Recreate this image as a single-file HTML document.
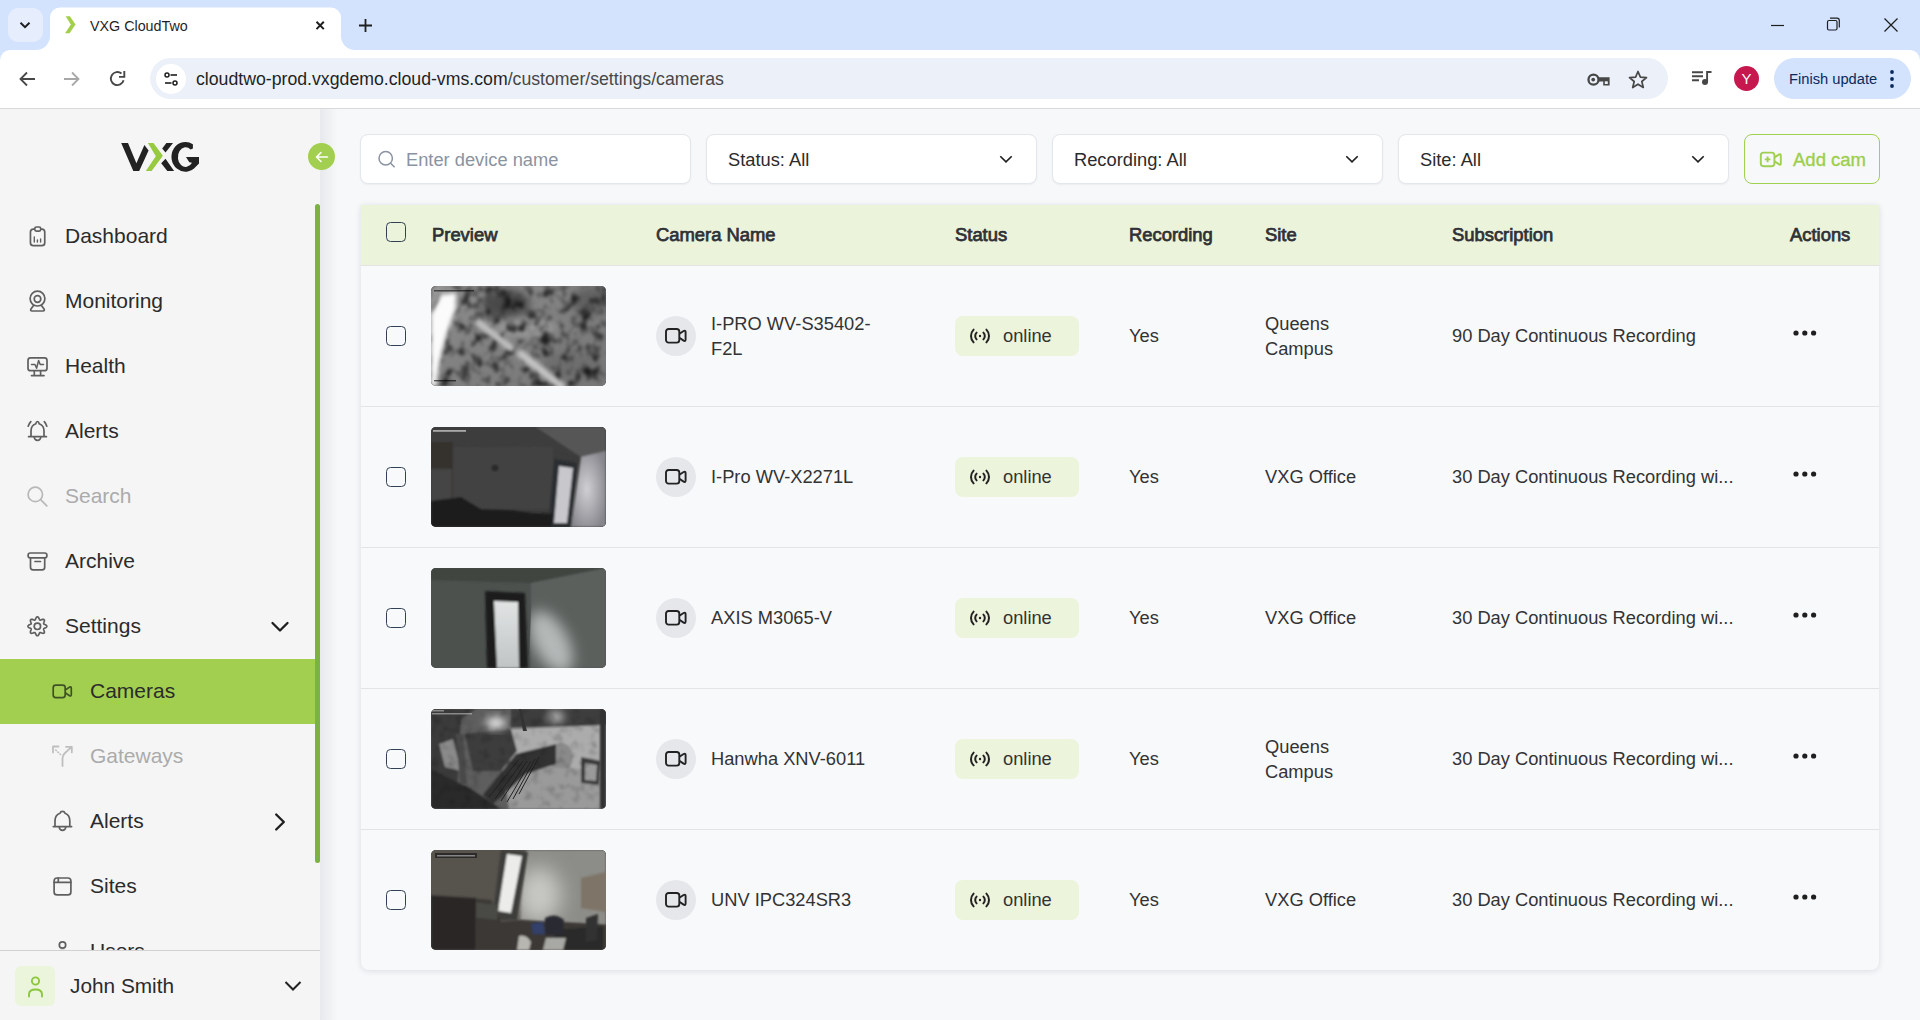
<!DOCTYPE html>
<html><head><meta charset="utf-8">
<style>
*{box-sizing:border-box;margin:0;padding:0}
html,body{width:1920px;height:1020px;overflow:hidden;background:#f7f8fa;font-family:"Liberation Sans",sans-serif;color:#2b2b2b}
.abs{position:absolute}
svg{display:block}
/* chrome */
#tabstrip{left:0;top:0;width:1920px;height:62px;background:#d3e3fd}
#toolbar{left:0;top:50px;width:1920px;height:58px;background:#fff}
#tbline{left:0;top:108px;width:1920px;height:1px;background:#d9d9d9}
/* sidebar */
#sidebar{left:0;top:109px;width:320px;height:911px;background:#f5f5f5;overflow:hidden}
.nav{position:absolute;left:0;width:315px;height:65px;line-height:65px;font-size:21px;color:#2b2b2b;white-space:nowrap}
.nav .ic{position:absolute;left:25px;top:20px;width:24px;height:24px}
.nav .tx{position:absolute;left:65px;top:-1px}
.nav.sub .ic{left:50px}
.nav.sub .tx{left:90px}
.nav.dis{color:#ababab}
/* main */
.field{position:absolute;top:134px;height:50px;background:#fff;border:1px solid #e3e6ea;border-radius:8px;box-shadow:0 1px 2px rgba(16,24,40,.05)}
.field .tx{position:absolute;left:21px;top:1px;line-height:48px;font-size:18.3px;color:#2b2b2b;white-space:nowrap}
.field .chev{position:absolute;right:23px;top:19px}
#card{left:361px;top:205px;width:1518px;height:765px;background:#f8f9fb;border-radius:0 0 8px 8px;box-shadow:0 1px 6px rgba(16,24,40,.12)}
#thead{left:0;top:0;width:1518px;height:61px;background:#ebf3db;border-bottom:1px solid #e4e4e4}
.th{position:absolute;top:0px;line-height:60px;font-size:18.4px;font-weight:400;color:#2f3136;-webkit-text-stroke:0.75px #2f3136;white-space:nowrap}
.row{position:absolute;left:0;width:1518px;height:141px;border-bottom:1px solid #e4e4e4}
.row:last-child{border-bottom:none}
.cb{position:absolute;width:20px;height:20px;border:1.4px solid #334155;border-radius:4.5px}
.thumb{position:absolute;left:70px;top:20px;width:175px;height:100px;border-radius:5px;overflow:hidden;background:#333}
.camic{position:absolute;left:295px;top:50px;width:40px;height:40px;border-radius:50%;background:#e5e7eb}
.td{position:absolute;font-size:18.3px;color:#333;white-space:nowrap;line-height:25px}
.pill{position:absolute;left:594px;top:50px;width:124px;height:40px;border-radius:8px;background:#edf4dc}
.pill .tx{position:absolute;left:48px;top:0;line-height:40px;font-size:18.3px;color:#333}
.dots{position:absolute;left:1431px;top:60px}
</style></head><body>


<!-- ============ BROWSER CHROME ============ -->
<div id="tabstrip" class="abs"></div>
<div class="abs" style="left:8px;top:8px;width:35px;height:34px;border-radius:10px;background:#e6eefd"></div>
<svg class="abs" style="left:17px;top:17px" width="16" height="16" viewBox="0 0 16 16"><path d="M3.5 5.8 L8 10.2 L12.5 5.8" fill="none" stroke="#1f1f1f" stroke-width="2"/></svg>
<svg class="abs" style="left:0;top:0" width="400" height="50" viewBox="0 0 400 50"><path d="M36 50 A14 14 0 0 0 50 36 L50 17.5 A10 10 0 0 1 60 7.5 L331 7.5 A10 10 0 0 1 341 17.5 L341 36 A14 14 0 0 0 355 50 Z" fill="#fff"/></svg>
<svg class="abs" style="left:60px;top:12px" width="20" height="24" viewBox="60 12 20 24"><path d="M66.2 16.6 L69.8 16.6 L75.2 24.6 L69.4 33 L65.6 33 L71.1 24.6 Z" fill="#a2cf48" stroke="#a2cf48" stroke-width="0.6" stroke-linejoin="round"/></svg>
<div class="abs" style="left:90px;top:16px;font-size:14.3px;line-height:20px;color:#1f1f1f;white-space:nowrap">VXG CloudTwo</div>
<svg class="abs" style="left:312px;top:17px" width="16" height="16" viewBox="0 0 16 16"><path d="M4.5 4.8 L11.8 12.1 M11.8 4.8 L4.5 12.1" stroke="#1f1f1f" stroke-width="2"/></svg>
<svg class="abs" style="left:357px;top:17px" width="17" height="17" viewBox="0 0 17 17"><path d="M8.5 2 V15 M2 8.5 H15" stroke="#1f1f1f" stroke-width="1.8"/></svg>
<svg class="abs" style="left:1768px;top:17px" width="18" height="18" viewBox="0 0 18 18"><path d="M3 8.5 H16" stroke="#1f1f1f" stroke-width="1.2"/></svg>
<svg class="abs" style="left:1824px;top:15px" width="18" height="18" viewBox="0 0 18 18"><rect x="3.5" y="5.5" width="9.5" height="9.5" rx="1.5" fill="none" stroke="#1f1f1f" stroke-width="1.2"/><path d="M6 3.2 H13 A2.3 2.3 0 0 1 15.3 5.5 V12.5" fill="none" stroke="#1f1f1f" stroke-width="1.2"/></svg>
<svg class="abs" style="left:1882px;top:16px" width="18" height="18" viewBox="0 0 18 18"><path d="M2.5 2.5 L15.5 15.5 M15.5 2.5 L2.5 15.5" stroke="#1f1f1f" stroke-width="1.3"/></svg>

<div id="toolbar" class="abs" style="border-radius:10px 10px 0 0"></div>
<div id="tbline" class="abs"></div>
<svg class="abs" style="left:17px;top:69px" width="20" height="20" viewBox="0 0 20 20"><path d="M18 10 H4 M10 3.5 L3.5 10 L10 16.5" fill="none" stroke="#474747" stroke-width="1.8"/></svg>
<svg class="abs" style="left:62px;top:69px" width="20" height="20" viewBox="0 0 20 20"><path d="M2 10 H16 M10 3.5 L16.5 10 L10 16.5" fill="none" stroke="#a8a8a8" stroke-width="1.8"/></svg>
<svg class="abs" style="left:107px;top:69px" width="20" height="20" viewBox="0 0 20 20"><path d="M16.6 11.3 A6.5 6.5 0 1 1 14.5 4.6" fill="none" stroke="#474747" stroke-width="1.9"/><path d="M12 7.9 H17.3 V2" fill="none" stroke="#474747" stroke-width="1.9"/></svg>
<div class="abs" style="left:150px;top:58px;width:1518px;height:41px;border-radius:21px;background:#ecf1f9"></div>
<div class="abs" style="left:156px;top:64px;width:30px;height:30px;border-radius:50%;background:#fff"></div>
<svg class="abs" style="left:163px;top:71px" width="16" height="16" viewBox="0 0 16 16"><circle cx="4" cy="4" r="2" fill="none" stroke="#1f1f1f" stroke-width="1.5"/><path d="M7.5 4 H14" stroke="#1f1f1f" stroke-width="1.6"/><circle cx="12" cy="12" r="2" fill="none" stroke="#1f1f1f" stroke-width="1.5"/><path d="M2 12 H8.5" stroke="#1f1f1f" stroke-width="1.6"/></svg>
<div class="abs" style="left:196px;top:68px;font-size:17.7px;line-height:22px;color:#1f1f1f;white-space:nowrap">cloudtwo-prod.vxgdemo.cloud-vms.com<span style="color:#474747">/customer/settings/cameras</span></div>
<svg class="abs" style="left:1584px;top:68px" width="30" height="22" viewBox="1584 68 30 22"><circle cx="1593.5" cy="79.7" r="5" fill="none" stroke="#474747" stroke-width="2.3"/><circle cx="1593.2" cy="79.6" r="1.9" fill="#474747"/><path d="M1598.5 77.3 H1609.6 V85.6 H1603.2 V81.6 H1598.5 Z" fill="#474747"/><rect x="1604.8" y="81.3" width="3" height="2.7" fill="#ecf1f9"/></svg>
<svg class="abs" style="left:1627px;top:69px" width="22" height="22" viewBox="0 0 22 22"><path d="M11 2.5 L13.4 8.2 L19.5 8.6 L14.8 12.5 L16.3 18.5 L11 15.2 L5.7 18.5 L7.2 12.5 L2.5 8.6 L8.6 8.2 Z" fill="none" stroke="#474747" stroke-width="1.7" stroke-linejoin="round"/></svg>
<svg class="abs" style="left:1690px;top:68px" width="24" height="22" viewBox="0 0 24 22"><path d="M2 4.3 H13 M2 8.2 H13 M2 12.2 H9" stroke="#474747" stroke-width="1.9"/><path d="M17.1 14 V4 H21.5" fill="none" stroke="#474747" stroke-width="1.9"/><circle cx="15" cy="14.1" r="3" fill="#474747"/></svg>
<div class="abs" style="left:1734px;top:66px;width:25px;height:25px;border-radius:50%;background:#c6174f;color:#fff;font-size:15px;line-height:25px;text-align:center">Y</div>
<div class="abs" style="left:1774px;top:58px;width:137px;height:41px;border-radius:21px;background:#d3e3fd"></div>
<div class="abs" style="left:1789px;top:68px;font-size:14.7px;line-height:22px;color:#0a2a5c;white-space:nowrap">Finish update</div>
<svg class="abs" style="left:1886px;top:68px" width="12" height="22" viewBox="0 0 12 22"><circle cx="6" cy="4" r="1.9" fill="#0a2a5c"/><circle cx="6" cy="11" r="1.9" fill="#0a2a5c"/><circle cx="6" cy="18" r="1.9" fill="#0a2a5c"/></svg>


<!-- ============ SIDEBAR ============ -->
<div id="sidebar" class="abs"></div>
<div class="abs" style="left:0;top:659px;width:315px;height:65px;background:#a2cf4f"></div>
<div class="nav " style="top:204px"><span class="tx">Dashboard</span></div>
<div class="nav " style="top:269px"><span class="tx">Monitoring</span></div>
<div class="nav " style="top:334px"><span class="tx">Health</span></div>
<div class="nav " style="top:399px"><span class="tx">Alerts</span></div>
<div class="nav dis" style="top:464px"><span class="tx">Search</span></div>
<div class="nav " style="top:529px"><span class="tx">Archive</span></div>
<div class="nav " style="top:594px"><span class="tx">Settings</span></div>
<div class="nav sub" style="top:659px"><span class="tx">Cameras</span></div>
<div class="nav sub dis" style="top:724px"><span class="tx">Gateways</span></div>
<div class="nav sub" style="top:789px"><span class="tx">Alerts</span></div>
<div class="nav sub" style="top:854px"><span class="tx">Sites</span></div>
<div class="nav sub" style="top:919px"><span class="tx">Users</span></div>

<svg class="abs" style="left:0;top:109px" width="320" height="911" viewBox="0 109 320 911"><g fill="none" stroke="#5f5f5f" stroke-width="1.7" stroke-linecap="round" stroke-linejoin="round">
<rect x="30.45" y="229.05" width="14.3" height="16.6" rx="3"/>
<rect x="34.8" y="227" width="5.9" height="4.2" rx="1.6" fill="#f5f5f5"/>
<path d="M34.3 237 V242 M37.4 240 V242 M40.6 239 V242" stroke-width="1.4"/>

<circle cx="37.5" cy="298.6" r="7.4"/>
<circle cx="37.5" cy="299" r="3.3"/>
<path d="M33.5 305.5 L30.8 309.3 Q30.2 311 32 311 H43 Q44.8 311 44.2 309.3 L41.5 305.5"/>

<rect x="28" y="357.8" width="19" height="12.9" rx="2.5"/>
<path d="M31.5 364.5 H35 L36.6 368.3 L38.6 360.5 L40.2 364.5 H43.5" stroke-width="1.5"/>
<path d="M34.3 371 V375.6 M40.6 371 V375.6 M31.5 375.6 H44"/>

<path d="M28.2 426.2 Q29 423.5 30.8 421.6 M44.3 421.6 Q46 423.5 46.8 426.2"/>
<path d="M31 436.7 V431 Q31 425.5 35.8 423.8 Q36.3 421.5 37.5 421.5 Q38.7 421.5 39.2 423.8 Q44 425.5 44 431 V436.7 M28.6 436.7 H46.4 M34.2 437 A3.3 3.3 0 0 0 40.8 437"/>

<g stroke="#b8b8b8"><circle cx="35.3" cy="494.4" r="7.2"/><path d="M40.6 499.7 L46.8 505.9"/></g>

<rect x="28.1" y="553" width="18.8" height="4.9" rx="2.2"/>
<path d="M30.5 557.9 V567.3 Q30.5 569.8 33 569.8 H42.2 Q44.7 569.8 44.7 567.3 V557.9 M35 561.5 H40.5"/>

<path d="M37.40 616.85 L37.77 616.92 L38.12 617.14 L38.45 617.47 L38.73 617.89 L38.98 618.36 L39.19 618.83 L39.38 619.27 L39.57 619.64 L39.76 619.91 L39.98 620.06 L40.25 620.11 L40.58 620.06 L40.97 619.93 L41.41 619.75 L41.90 619.57 L42.41 619.41 L42.91 619.32 L43.37 619.31 L43.77 619.41 L44.08 619.62 L44.29 619.93 L44.39 620.33 L44.38 620.79 L44.29 621.29 L44.13 621.80 L43.95 622.29 L43.77 622.73 L43.64 623.12 L43.59 623.45 L43.64 623.72 L43.79 623.94 L44.06 624.13 L44.43 624.32 L44.87 624.51 L45.34 624.72 L45.81 624.97 L46.23 625.25 L46.56 625.58 L46.78 625.93 L46.85 626.30 L46.78 626.67 L46.56 627.02 L46.23 627.35 L45.81 627.63 L45.34 627.88 L44.87 628.09 L44.43 628.28 L44.06 628.47 L43.79 628.66 L43.64 628.88 L43.59 629.15 L43.64 629.48 L43.77 629.87 L43.95 630.31 L44.13 630.80 L44.29 631.31 L44.38 631.81 L44.39 632.27 L44.29 632.67 L44.08 632.98 L43.77 633.19 L43.37 633.29 L42.91 633.28 L42.41 633.19 L41.90 633.03 L41.41 632.85 L40.97 632.67 L40.58 632.54 L40.25 632.49 L39.98 632.54 L39.76 632.69 L39.57 632.96 L39.38 633.33 L39.19 633.77 L38.98 634.24 L38.73 634.71 L38.45 635.13 L38.12 635.46 L37.77 635.68 L37.40 635.75 L37.03 635.68 L36.68 635.46 L36.35 635.13 L36.07 634.71 L35.82 634.24 L35.61 633.77 L35.42 633.33 L35.23 632.96 L35.04 632.69 L34.82 632.54 L34.55 632.49 L34.22 632.54 L33.83 632.67 L33.39 632.85 L32.90 633.03 L32.39 633.19 L31.89 633.28 L31.43 633.29 L31.03 633.19 L30.72 632.98 L30.51 632.67 L30.41 632.27 L30.42 631.81 L30.51 631.31 L30.67 630.80 L30.85 630.31 L31.03 629.87 L31.16 629.48 L31.21 629.15 L31.16 628.88 L31.01 628.66 L30.74 628.47 L30.37 628.28 L29.93 628.09 L29.46 627.88 L28.99 627.63 L28.57 627.35 L28.24 627.02 L28.02 626.67 L27.95 626.30 L28.02 625.93 L28.24 625.58 L28.57 625.25 L28.99 624.97 L29.46 624.72 L29.93 624.51 L30.37 624.32 L30.74 624.13 L31.01 623.94 L31.16 623.72 L31.21 623.45 L31.16 623.12 L31.03 622.73 L30.85 622.29 L30.67 621.80 L30.51 621.29 L30.42 620.79 L30.41 620.33 L30.51 619.93 L30.72 619.62 L31.03 619.41 L31.43 619.31 L31.89 619.32 L32.39 619.41 L32.90 619.57 L33.39 619.75 L33.83 619.93 L34.22 620.06 L34.55 620.11 L34.82 620.06 L35.04 619.91 L35.23 619.64 L35.42 619.27 L35.61 618.83 L35.82 618.36 L36.07 617.89 L36.35 617.47 L36.68 617.14 L37.03 616.92 L37.40 616.85Z"/>
<circle cx="37.4" cy="626.3" r="3.2"/>

<g stroke="#3f5225"><rect x="53.2" y="685.1" width="12" height="12.6" rx="2.6"/><path d="M65.5 689.8 L69.6 687.1 Q71.3 686.2 71.3 688.2 V694.6 Q71.3 696.6 69.6 695.7 L65.5 693"/></g>

<g stroke="#bfbfbf" stroke-width="1.8"><path d="M53 752.4 V746.5 H58.5 M66 746.8 H71.8 V752.4 M71.6 746.8 L64.5 753.5 Q62.5 755.5 62.5 758.5 V766"/><path d="M55.7 750 L56.3 750.5 M57.8 752 L58.4 752.5 M60 754 L60.6 754.5" stroke-width="1.6"/></g>

<path d="M55 826.6 V821 Q55 815 60 813.3 Q60.6 811.4 62.5 811.4 Q64.4 811.4 65 813.3 Q69.8 815 69.8 821 V826.6 M53.3 826.6 H71.6 M59.2 827 A3.3 3.3 0 0 0 65.8 827"/>

<rect x="54.1" y="878" width="16.8" height="16.9" rx="3"/>
<path d="M54.1 882.3 H70.9 M58.3 878 V882.3"/>

<circle cx="62.5" cy="945" r="3.2"/>
<path d="M56 955 Q56 950.5 62.5 950.5 Q69 950.5 69 955"/>
</g></svg>
<svg class="abs" style="left:268px;top:618px" width="24" height="18" viewBox="0 0 24 18"><path d="M4.5 5 L12 12.5 L19.5 5" fill="none" stroke="#1f1f1f" stroke-width="2.3" stroke-linecap="round" stroke-linejoin="round"/></svg>
<svg class="abs" style="left:271px;top:811px" width="18" height="22" viewBox="0 0 18 22"><path d="M5.2 3.5 L12.8 11 L5.2 18.5" fill="none" stroke="#1f1f1f" stroke-width="2.4" stroke-linecap="round" stroke-linejoin="round"/></svg>
<div class="abs" style="left:0;top:950px;width:320px;height:70px;background:#f5f5f5;border-top:1px solid #d2d2d2"></div>
<div class="abs" style="left:15px;top:966px;width:40px;height:40px;border-radius:6px;background:#ebf5dc"></div>
<svg class="abs" style="left:15px;top:966px" width="40" height="40" viewBox="0 0 40 40"><circle cx="20.5" cy="15" r="3.6" fill="none" stroke="#8cc63f" stroke-width="1.9"/><path d="M14 30.5 V28.5 Q14 23.5 20.5 23.5 Q27 23.5 27 28.5 V30.5" fill="none" stroke="#8cc63f" stroke-width="1.9" stroke-linecap="round"/></svg>
<div class="abs" style="left:70px;top:966px;line-height:40px;font-size:20.8px;color:#2b2b2b;white-space:nowrap">John Smith</div>
<svg class="abs" style="left:282px;top:977px" width="22" height="18" viewBox="0 0 22 18"><path d="M3.5 5 L11 12.5 L18.5 5" fill="none" stroke="#222" stroke-width="2"/></svg>
<svg class="abs" style="left:116px;top:136px" width="90" height="42" viewBox="116 136 90 42">
<path d="M121.2 143 L128 143 L136.4 163.2 L144.4 144.9 L148.6 150.5 L139.2 170.9 L133.3 170.9 Z" fill="#222"/>
<path d="M147.9 143 L153.5 143 L162.9 155.7 L151.6 170.9 L145.8 170.9 L155.8 156.2 Z" fill="#97ca40"/>
<path d="M162.2 148.4 L166.4 143 L173 143 L165.5 152.6 Z M161.2 163.2 L165.5 158.7 L174.1 170.9 L167.3 170.9 Z" fill="#222"/>
<path d="M192.9 144.2 A14 14.9 0 1 0 196.0 166.6 L199 163.5 L199 157.1 L186 157.1 L189.3 162.3 L192 162.7 A7.75 9.8 0 1 1 190.6 149.6 L192.9 148.6 Z" fill="#222"/>
</svg>
<div class="abs" style="left:315px;top:204px;width:5px;height:659px;border-radius:3px;background:#7bb343"></div>
<div class="abs" style="left:320px;top:109px;width:18px;height:911px;background:linear-gradient(90deg,#e8e9ec,rgba(247,248,250,0))"></div>
<div class="abs" style="left:308px;top:143px;width:27px;height:27px;border-radius:50%;background:#a2cf4f"></div>
<svg class="abs" style="left:308px;top:143px" width="27" height="27" viewBox="0 0 27 27"><path d="M19.5 14 H8.5 M13 9.5 L8.5 14 L13 18.5" fill="none" stroke="#fff" stroke-width="1.6" stroke-linecap="round" stroke-linejoin="round"/></svg>


<!-- ============ MAIN ============ -->
<div class="field" style="left:360px;width:331px">
 <svg class="abs" style="left:16px;top:15px" width="20" height="20" viewBox="0 0 20 20"><circle cx="8.7" cy="8.3" r="6.7" fill="none" stroke="#8b93a1" stroke-width="1.5"/><path d="M13.6 13.2 L17.6 17.2" stroke="#8b93a1" stroke-width="1.6"/></svg>
 <div class="tx" style="left:45px;color:#8b93a1">Enter device name</div>
</div>
<div class="field" style="left:706px;width:331px"><div class="tx">Status: All</div><svg class="chev" width="14" height="10" viewBox="0 0 14 10"><path d="M1.3 2.2 L7 7.9 L12.7 2.2" fill="none" stroke="#1f1f1f" stroke-width="1.6"/></svg></div>
<div class="field" style="left:1052px;width:331px"><div class="tx">Recording: All</div><svg class="chev" width="14" height="10" viewBox="0 0 14 10"><path d="M1.3 2.2 L7 7.9 L12.7 2.2" fill="none" stroke="#1f1f1f" stroke-width="1.6"/></svg></div>
<div class="field" style="left:1398px;width:331px"><div class="tx">Site: All</div><svg class="chev" width="14" height="10" viewBox="0 0 14 10"><path d="M1.3 2.2 L7 7.9 L12.7 2.2" fill="none" stroke="#1f1f1f" stroke-width="1.6"/></svg></div>
<div class="abs" style="left:1744px;top:134px;width:136px;height:50px;border:1.5px solid #a0d050;border-radius:8px"></div>
<svg class="abs" style="left:1758px;top:150px" width="26" height="20" viewBox="0 0 26 20"><rect x="2.8" y="2.6" width="13.6" height="13.6" rx="2.6" fill="none" stroke="#a0d050" stroke-width="1.9"/><path d="M16.6 7.4 L21.2 4.4 Q22.8 3.5 22.8 5.4 V13.4 Q22.8 15.3 21.2 14.4 L16.6 11.4" fill="none" stroke="#a0d050" stroke-width="1.9" stroke-linejoin="round"/><path d="M9.6 6.6 V12.2 M6.8 9.4 H12.4" stroke="#a0d050" stroke-width="1.9"/></svg>
<div class="abs" style="left:1793px;top:135px;line-height:50px;font-size:18.5px;font-weight:400;color:#9ccf4a;white-space:nowrap;-webkit-text-stroke:0.35px #9ccf4a">Add cam</div>

<div id="card" class="abs">
 <div id="thead" class="abs">
  <div class="cb" style="left:25px;top:17px"></div>
  <div class="th" style="left:71px">Preview</div>
  <div class="th" style="left:295px">Camera Name</div>
  <div class="th" style="left:594px">Status</div>
  <div class="th" style="left:768px">Recording</div>
  <div class="th" style="left:904px">Site</div>
  <div class="th" style="left:1091px">Subscription</div>
  <div class="th" style="left:1429px">Actions</div>
 </div>
<div class="row" style="top:61px">
 <div class="cb" style="left:25px;top:60px"></div>
 <div class="thumb"><svg width="175" height="100" viewBox="0 0 175 100">
<defs>
<filter id="b1" x="-50%" y="-50%" width="200%" height="200%"><feGaussianBlur stdDeviation="4"/></filter>
<filter id="b2" x="-50%" y="-50%" width="200%" height="200%"><feGaussianBlur stdDeviation="2.2"/></filter>
<filter id="b3" x="-10%" y="-10%" width="120%" height="120%"><feGaussianBlur stdDeviation="1.3"/></filter>
<filter id="f1" x="0" y="0" width="100%" height="100%"><feTurbulence type="fractalNoise" baseFrequency="0.1 0.085" numOctaves="2" seed="11"/><feColorMatrix type="matrix" values="0 0 0 0 0  0 0 0 0 0  0 0 0 0 0  2.8 0 0 0 -1.25"/><feGaussianBlur stdDeviation="1.7"/></filter>
<linearGradient id="g1" x1="0" y1="0" x2="1" y2="1"><stop offset="0" stop-color="#8e8e8e"/><stop offset="0.5" stop-color="#808080"/><stop offset="1" stop-color="#767676"/></linearGradient>
</defs>
<rect width="175" height="100" fill="url(#g1)"/>
<g filter="url(#b1)">
<ellipse cx="75" cy="18" rx="24" ry="15" fill="#4a4a4a"/>
<ellipse cx="160" cy="15" rx="20" ry="14" fill="#606060"/>
<ellipse cx="95" cy="42" rx="30" ry="8" fill="#9c9c9c"/>
<ellipse cx="140" cy="80" rx="30" ry="16" fill="#6e6e6e"/>
</g>
<rect width="175" height="100" fill="#2a2a2a" filter="url(#f1)" opacity="0.75"/>
<g filter="url(#b2)">
<path d="M48 37 L80 62" stroke="#c0c0c0" stroke-width="7" stroke-linecap="round"/>
<path d="M90 68 L130 100" stroke="#c4c4c4" stroke-width="8" stroke-linecap="round"/>
</g>
<path d="M0 28 L10 8 L25 7 L25 22 L15 50 L9 75 L5 100 L0 100 Z" fill="#fbfbfb" filter="url(#b2)"/>
<path d="M0 0 L12 0 L0 28 Z" fill="#9a9a9a" filter="url(#b2)"/>
<rect x="3" y="4" width="40" height="1.5" fill="#000" opacity="0.55"/>
<rect x="3" y="94" width="22" height="1.4" fill="#000" opacity="0.6"/>
</svg></div>
 <div class="camic"><svg class="abs" style="left:9px;top:12px" width="22" height="16" viewBox="0 0 22 16"><rect x="1" y="1" width="13.3" height="13.6" rx="2.6" fill="none" stroke="#222" stroke-width="1.9"/><path d="M14.4 5.8 L18.6 3 Q20.6 2 20.6 4 V11.6 Q20.6 13.6 18.6 12.6 L14.4 9.8" fill="none" stroke="#222" stroke-width="1.9" stroke-linejoin="round"/></svg></div>
 <div class="td" style="left:350px;top:45px">I-PRO WV-S35402-<br>F2L</div>
 <div class="pill"><svg class="abs" style="left:14px;top:12px" width="22" height="16" viewBox="0 0 22 16"><circle cx="11" cy="8" r="1.2" fill="#222"/><path d="M7.6 4.6 Q6.2 6 6.2 8 Q6.2 10 7.6 11.4 M14.4 4.6 Q15.8 6 15.8 8 Q15.8 10 14.4 11.4 M4.6 1.6 Q2 4.2 2 8 Q2 11.8 4.6 14.4 M17.4 1.6 Q20 4.2 20 8 Q20 11.8 17.4 14.4" fill="none" stroke="#222" stroke-width="2" stroke-linecap="round"/></svg><div class="tx">online</div></div>
 <div class="td" style="left:768px;top:57px">Yes</div>
 <div class="td" style="left:904px;top:45px">Queens<br>Campus</div>
 <div class="td" style="left:1091px;top:57px">90 Day Continuous Recording</div>
 <svg class="abs" style="left:1431px;top:61px" width="28" height="12" viewBox="0 0 28 12"><circle cx="4" cy="6" r="2.6" fill="#1f1f1f"/><circle cx="12.8" cy="6" r="2.6" fill="#1f1f1f"/><circle cx="21.6" cy="6" r="2.6" fill="#1f1f1f"/></svg>
</div>
<div class="row" style="top:202px">
 <div class="cb" style="left:25px;top:60px"></div>
 <div class="thumb"><svg width="175" height="100" viewBox="0 0 175 100">
<defs>
<filter id="c2" x="-50%" y="-50%" width="200%" height="200%"><feGaussianBlur stdDeviation="1.2"/></filter>
<radialGradient id="r2" cx="0.45" cy="0.5" r="0.6"><stop offset="0" stop-color="#d0d0d4"/><stop offset="1" stop-color="#86868c"/></radialGradient>
</defs>
<rect width="175" height="100" fill="#3c3c3c"/>
<g filter="url(#c2)">
<path d="M0 0 H120 L175 0 V28 L150 30 L120 20 L0 18 Z" fill="#3e3e3e"/>
<path d="M105 0 H175 V30 L150 30 Z" fill="#575757"/>
<rect x="0" y="15" width="22" height="60" fill="#36322e"/>
<rect x="0" y="42" width="21" height="33" fill="#454545"/>
<rect x="22" y="20" width="100" height="62" fill="#434343"/>
<path d="M150 30 L175 24 V100 H140 Z" fill="url(#r2)"/>
<path d="M123 32 L146 36 L140 100 L117 100 Z" fill="#2b2e31"/>
<path d="M128 39 L142 41 L136 96 L123 96 Z" fill="#c8c8cc"/>
<path d="M0 74 L30 70 L50 82 L80 83 L100 86 L122 87 L120 100 L0 100 Z" fill="#1c1c1c"/>
<circle cx="64" cy="41" r="3.6" fill="#2a2a2a"/>
</g>
<rect x="2" y="3" width="33" height="1.8" fill="#fff" opacity="0.55"/>
</svg></div>
 <div class="camic"><svg class="abs" style="left:9px;top:12px" width="22" height="16" viewBox="0 0 22 16"><rect x="1" y="1" width="13.3" height="13.6" rx="2.6" fill="none" stroke="#222" stroke-width="1.9"/><path d="M14.4 5.8 L18.6 3 Q20.6 2 20.6 4 V11.6 Q20.6 13.6 18.6 12.6 L14.4 9.8" fill="none" stroke="#222" stroke-width="1.9" stroke-linejoin="round"/></svg></div>
 <div class="td" style="left:350px;top:57px">I-Pro WV-X2271L</div>
 <div class="pill"><svg class="abs" style="left:14px;top:12px" width="22" height="16" viewBox="0 0 22 16"><circle cx="11" cy="8" r="1.2" fill="#222"/><path d="M7.6 4.6 Q6.2 6 6.2 8 Q6.2 10 7.6 11.4 M14.4 4.6 Q15.8 6 15.8 8 Q15.8 10 14.4 11.4 M4.6 1.6 Q2 4.2 2 8 Q2 11.8 4.6 14.4 M17.4 1.6 Q20 4.2 20 8 Q20 11.8 17.4 14.4" fill="none" stroke="#222" stroke-width="2" stroke-linecap="round"/></svg><div class="tx">online</div></div>
 <div class="td" style="left:768px;top:57px">Yes</div>
 <div class="td" style="left:904px;top:57px">VXG Office</div>
 <div class="td" style="left:1091px;top:57px">30 Day Continuous Recording wi...</div>
 <svg class="abs" style="left:1431px;top:61px" width="28" height="12" viewBox="0 0 28 12"><circle cx="4" cy="6" r="2.6" fill="#1f1f1f"/><circle cx="12.8" cy="6" r="2.6" fill="#1f1f1f"/><circle cx="21.6" cy="6" r="2.6" fill="#1f1f1f"/></svg>
</div>
<div class="row" style="top:343px">
 <div class="cb" style="left:25px;top:60px"></div>
 <div class="thumb"><svg width="175" height="100" viewBox="0 0 175 100">
<defs>
<filter id="c3" x="-50%" y="-50%" width="200%" height="200%"><feGaussianBlur stdDeviation="1"/></filter>
<filter id="c3b" x="-50%" y="-50%" width="200%" height="200%"><feGaussianBlur stdDeviation="7"/></filter>
<linearGradient id="d3" x1="0" y1="0" x2="0" y2="1"><stop offset="0" stop-color="#e2e4e4"/><stop offset="1" stop-color="#c0c4c4"/></linearGradient>
</defs>
<rect width="175" height="100" fill="#4c514e"/>
<g filter="url(#c3)">
<path d="M0 0 H175 L100 15 L0 12 Z" fill="#3f4441"/>
<path d="M100 15 L175 0 V100 H100 Z" fill="#5b605d"/>
</g>
<clipPath id="cl3"><path d="M101 15 L175 0 V100 H98 Z"/></clipPath><g clip-path="url(#cl3)"><ellipse cx="120" cy="74" rx="17" ry="34" transform="rotate(-28 120 74)" fill="#b4b8b7" filter="url(#c3b)"/></g>
<g filter="url(#c3)">
<path d="M54 23 L94 25 L97 100 L56 100 Z" fill="#1d1f1f"/>
<path d="M63 33 L87 34 L88 100 L66 100 Z" fill="url(#d3)"/>
</g>
</svg></div>
 <div class="camic"><svg class="abs" style="left:9px;top:12px" width="22" height="16" viewBox="0 0 22 16"><rect x="1" y="1" width="13.3" height="13.6" rx="2.6" fill="none" stroke="#222" stroke-width="1.9"/><path d="M14.4 5.8 L18.6 3 Q20.6 2 20.6 4 V11.6 Q20.6 13.6 18.6 12.6 L14.4 9.8" fill="none" stroke="#222" stroke-width="1.9" stroke-linejoin="round"/></svg></div>
 <div class="td" style="left:350px;top:57px">AXIS M3065-V</div>
 <div class="pill"><svg class="abs" style="left:14px;top:12px" width="22" height="16" viewBox="0 0 22 16"><circle cx="11" cy="8" r="1.2" fill="#222"/><path d="M7.6 4.6 Q6.2 6 6.2 8 Q6.2 10 7.6 11.4 M14.4 4.6 Q15.8 6 15.8 8 Q15.8 10 14.4 11.4 M4.6 1.6 Q2 4.2 2 8 Q2 11.8 4.6 14.4 M17.4 1.6 Q20 4.2 20 8 Q20 11.8 17.4 14.4" fill="none" stroke="#222" stroke-width="2" stroke-linecap="round"/></svg><div class="tx">online</div></div>
 <div class="td" style="left:768px;top:57px">Yes</div>
 <div class="td" style="left:904px;top:57px">VXG Office</div>
 <div class="td" style="left:1091px;top:57px">30 Day Continuous Recording wi...</div>
 <svg class="abs" style="left:1431px;top:61px" width="28" height="12" viewBox="0 0 28 12"><circle cx="4" cy="6" r="2.6" fill="#1f1f1f"/><circle cx="12.8" cy="6" r="2.6" fill="#1f1f1f"/><circle cx="21.6" cy="6" r="2.6" fill="#1f1f1f"/></svg>
</div>
<div class="row" style="top:484px">
 <div class="cb" style="left:25px;top:60px"></div>
 <div class="thumb"><svg width="175" height="100" viewBox="0 0 175 100">
<defs>
<filter id="c4" x="-50%" y="-50%" width="200%" height="200%"><feGaussianBlur stdDeviation="1.3"/></filter>
<filter id="c4b" x="-50%" y="-50%" width="200%" height="200%"><feGaussianBlur stdDeviation="5"/></filter>
<filter id="n4" x="0" y="0" width="100%" height="100%"><feTurbulence type="fractalNoise" baseFrequency="0.12" numOctaves="2" seed="3"/><feColorMatrix type="matrix" values="0 0 0 0 0  0 0 0 0 0  0 0 0 0 0  1.8 0 0 0 -0.9"/><feGaussianBlur stdDeviation="0.8"/></filter>
</defs>
<rect width="175" height="100" fill="#5e5e5e"/>
<g filter="url(#c4)">
<rect x="80" y="0" width="95" height="18" fill="#3e3e3e"/>
<path d="M78 20 L175 16 V100 H80 Z" fill="#acacac"/><ellipse cx="130" cy="48" rx="12" ry="14" fill="#8a8a8a"/><ellipse cx="120" cy="80" rx="14" ry="12" fill="#7a7a7a"/>
<path d="M70 55 L110 58 L150 60 L175 70 V100 H78 Z" fill="#9a9a9a"/>
<path d="M0 0 H45 L30 10 L25 100 H0 Z" fill="#3a3a3a"/>
<path d="M8 35 L22 30 L30 62 L14 58 Z" fill="#8a8a8a"/>
<path d="M0 60 L40 80 L70 100 H0 Z" fill="#2c2c2c"/>
<path d="M34 25 L80 20 L86 42 L70 62 L42 62 Z" fill="#3c3c3c"/>
<path d="M25 25 L32 25 L36 75 L29 75 Z" fill="#4a4a4a"/>
<path d="M52 86 L85 45 L125 35 L125 55 L95 65 L62 95 Z" fill="#333"/>
<path d="M150 48 L170 52 L168 76 L150 74 Z" fill="#3a3a3a"/>
<path d="M154 54 L166 56 L165 72 L154 71 Z" fill="#9a9a9a"/>
</g>
<g stroke="#222" stroke-width="1">
<path d="M58 88 L88 50 M64 90 L92 52 M70 92 L96 52 M76 93 L100 52 M82 90 L104 50 M88 85 L108 48"/>
</g>
<ellipse cx="65" cy="14" rx="10" ry="6" fill="#f0f0f0" filter="url(#c4b)"/>
<ellipse cx="125" cy="8" rx="8" ry="5" fill="#d8d8d8" filter="url(#c4b)"/>
<rect width="175" height="100" fill="#202020" filter="url(#n4)" opacity="0.3"/>
<path d="M88 0 L92 22 L96 22 L90 0 Z" fill="#333"/><rect x="169" y="0" width="6" height="100" fill="#333" filter="url(#c4)"/>
<rect x="1" y="1" width="12" height="1.5" fill="#fff" opacity="0.4"/><rect x="1" y="4" width="40" height="1.5" fill="#fff" opacity="0.4"/>
</svg></div>
 <div class="camic"><svg class="abs" style="left:9px;top:12px" width="22" height="16" viewBox="0 0 22 16"><rect x="1" y="1" width="13.3" height="13.6" rx="2.6" fill="none" stroke="#222" stroke-width="1.9"/><path d="M14.4 5.8 L18.6 3 Q20.6 2 20.6 4 V11.6 Q20.6 13.6 18.6 12.6 L14.4 9.8" fill="none" stroke="#222" stroke-width="1.9" stroke-linejoin="round"/></svg></div>
 <div class="td" style="left:350px;top:57px">Hanwha XNV-6011</div>
 <div class="pill"><svg class="abs" style="left:14px;top:12px" width="22" height="16" viewBox="0 0 22 16"><circle cx="11" cy="8" r="1.2" fill="#222"/><path d="M7.6 4.6 Q6.2 6 6.2 8 Q6.2 10 7.6 11.4 M14.4 4.6 Q15.8 6 15.8 8 Q15.8 10 14.4 11.4 M4.6 1.6 Q2 4.2 2 8 Q2 11.8 4.6 14.4 M17.4 1.6 Q20 4.2 20 8 Q20 11.8 17.4 14.4" fill="none" stroke="#222" stroke-width="2" stroke-linecap="round"/></svg><div class="tx">online</div></div>
 <div class="td" style="left:768px;top:57px">Yes</div>
 <div class="td" style="left:904px;top:45px">Queens<br>Campus</div>
 <div class="td" style="left:1091px;top:57px">30 Day Continuous Recording wi...</div>
 <svg class="abs" style="left:1431px;top:61px" width="28" height="12" viewBox="0 0 28 12"><circle cx="4" cy="6" r="2.6" fill="#1f1f1f"/><circle cx="12.8" cy="6" r="2.6" fill="#1f1f1f"/><circle cx="21.6" cy="6" r="2.6" fill="#1f1f1f"/></svg>
</div>
<div class="row" style="top:625px">
 <div class="cb" style="left:25px;top:60px"></div>
 <div class="thumb"><svg width="175" height="100" viewBox="0 0 175 100">
<defs>
<filter id="c5" x="-50%" y="-50%" width="200%" height="200%"><feGaussianBlur stdDeviation="1.1"/></filter>
<filter id="c5b" x="-50%" y="-50%" width="200%" height="200%"><feGaussianBlur stdDeviation="10"/></filter>
</defs>
<rect width="175" height="100" fill="#57534d"/>
<g filter="url(#c5)">
<path d="M95 0 H175 V75 L90 70 Z" fill="#8c8c88"/>
</g>
<ellipse cx="108" cy="45" rx="22" ry="28" fill="#c8c8c4" filter="url(#c5b)"/>
<g filter="url(#c5)">
<path d="M150 28 L175 22 V62 L150 58 Z" fill="#7e7468"/>
<path d="M70 0 L97 2 L86 70 L61 70 Z" fill="#3c3c3a"/>
<path d="M76 4 L91 6 L80 63 L67 61 Z" fill="#ececea"/>
<path d="M0 45 L60 50 L70 72 L90 70 L175 75 V100 H0 Z" fill="#3b3935"/>
<path d="M0 46 L45 48 L44 100 H0 Z" fill="#2a2825"/><path d="M125 80 L172 76 V100 H120 Z" fill="#2a2a2a"/>
<path d="M45 52 L68 55 L66 70 L45 68 Z" fill="#4a4844"/>
<path d="M114 68 Q124 62 133 70 L132 85 L114 85 Z" fill="#2a2a30"/>
<path d="M100 74 L112 72 L114 84 L102 84 Z" fill="#30406a"/>
<path d="M155 68 L167 64 L166 90 L155 92 Z" fill="#333"/>
<path d="M88 86 Q95 84 100 92 L98 100 L86 100 Z" fill="#b8b6b0"/>
<path d="M115 88 L135 88 L132 100 L112 100 Z" fill="#a8a8a4"/>
</g>
<rect x="4" y="3" width="42" height="5" fill="#222" opacity="0.8"/>
<rect x="6" y="5" width="38" height="1.5" fill="#ddd" opacity="0.5"/>
</svg></div>
 <div class="camic"><svg class="abs" style="left:9px;top:12px" width="22" height="16" viewBox="0 0 22 16"><rect x="1" y="1" width="13.3" height="13.6" rx="2.6" fill="none" stroke="#222" stroke-width="1.9"/><path d="M14.4 5.8 L18.6 3 Q20.6 2 20.6 4 V11.6 Q20.6 13.6 18.6 12.6 L14.4 9.8" fill="none" stroke="#222" stroke-width="1.9" stroke-linejoin="round"/></svg></div>
 <div class="td" style="left:350px;top:57px">UNV IPC324SR3</div>
 <div class="pill"><svg class="abs" style="left:14px;top:12px" width="22" height="16" viewBox="0 0 22 16"><circle cx="11" cy="8" r="1.2" fill="#222"/><path d="M7.6 4.6 Q6.2 6 6.2 8 Q6.2 10 7.6 11.4 M14.4 4.6 Q15.8 6 15.8 8 Q15.8 10 14.4 11.4 M4.6 1.6 Q2 4.2 2 8 Q2 11.8 4.6 14.4 M17.4 1.6 Q20 4.2 20 8 Q20 11.8 17.4 14.4" fill="none" stroke="#222" stroke-width="2" stroke-linecap="round"/></svg><div class="tx">online</div></div>
 <div class="td" style="left:768px;top:57px">Yes</div>
 <div class="td" style="left:904px;top:57px">VXG Office</div>
 <div class="td" style="left:1091px;top:57px">30 Day Continuous Recording wi...</div>
 <svg class="abs" style="left:1431px;top:61px" width="28" height="12" viewBox="0 0 28 12"><circle cx="4" cy="6" r="2.6" fill="#1f1f1f"/><circle cx="12.8" cy="6" r="2.6" fill="#1f1f1f"/><circle cx="21.6" cy="6" r="2.6" fill="#1f1f1f"/></svg>
</div>

</div>

</body></html>
